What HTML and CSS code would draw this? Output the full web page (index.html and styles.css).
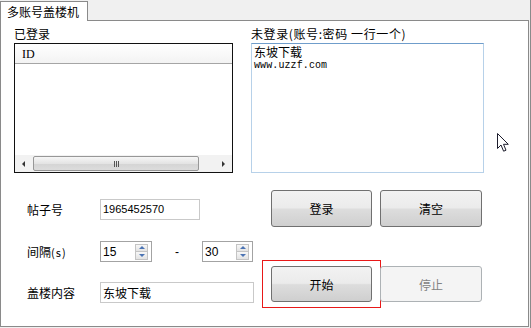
FILE: index.html
```html
<!DOCTYPE html>
<html lang="zh">
<head>
<meta charset="utf-8">
<title>多账号盖楼机</title>
<link rel="stylesheet" href="styles.css">
</head>
<body>
<div class="window">
  <div class="tabs"><div class="tab">多账号盖楼机</div></div>
  <div class="panel">
    <div class="top">
      <div class="col col-left">
        <div class="label">已登录</div>
        <div class="listbox">
          <div class="lv-header"><span class="lv-col">ID</span></div>
          <div class="lv-body"></div>
          <div class="hscroll">
            <div class="sb-btn"><span class="tri-left"></span></div>
            <div class="sb-track"><div class="sb-thumb"><span class="grip"></span><span class="grip"></span><span class="grip"></span></div></div>
            <div class="sb-btn"><span class="tri-right"></span></div>
          </div>
        </div>
      </div>
      <div class="col col-right">
        <div class="label label-wide">未登录(账号:密码 一行一个)</div>
        <div class="textarea">
          <div class="ta-line1">东坡下载</div>
          <div class="ta-line2">www.uzzf.com</div>
        </div>
      </div>
    </div>
    <div class="bottom">
      <div class="form">
        <div class="row row1">
          <div class="flabel">帖子号</div>
          <div class="input w-post">1965452570</div>
        </div>
        <div class="row row2">
          <div class="flabel">间隔<span class="paren">(s)</span></div>
          <div class="spin w-spin1"><span class="spin-val">15</span><span class="spin-btns"><span class="sbtn"><i class="up"></i></span><span class="sbtn"><i class="down"></i></span></span></div>
          <div class="dash">-</div>
          <div class="spin w-spin2"><span class="spin-val">30</span><span class="spin-btns"><span class="sbtn"><i class="up"></i></span><span class="sbtn"><i class="down"></i></span></span></div>
        </div>
        <div class="row row3">
          <div class="flabel">盖楼内容</div>
          <div class="input w-content cjk">东坡下载</div>
        </div>
      </div>
      <div class="buttons">
        <div class="btn">登录</div>
        <div class="btn btn-wide">清空</div>
        <div class="btn focused">开始</div>
        <div class="btn btn-wide disabled">停止</div>
      </div>
    </div>
    <svg class="cursor" width="13" height="20" viewBox="0 0 13 20"><path d="M0.5 0.5 L0.5 15.5 L4 12 L6.6 18.2 L9 17.2 L6.5 11.3 L11.3 11.3 Z" fill="#fff" stroke="#1c1c2c" stroke-width="1" stroke-linejoin="miter"/></svg>
  </div>
</div>
</body>
</html>
```

FILE: styles.css
```css
* { box-sizing: border-box; }
html, body { margin: 0; padding: 0; }
body {
  background: #f0f0f0;
  font-family: "Noto Sans CJK SC", "Liberation Sans", sans-serif;
  font-size: 12px;
  color: #000;
  width: 531px;
  height: 328px;
  overflow: hidden;
}
.window {
  width: 531px;
  height: 328px;
  border-right: 1px solid #8a8a8a;
  background: #f0f0f0;
}
.tabs {
  height: 20px;
  display: flex;
  align-items: flex-end;
}
.tab {
  position: relative;
  z-index: 1;
  width: 88px;
  height: 20px;
  margin-bottom: -1px;
  background: #fff;
  border: 1px solid #8a8a8a;
  border-bottom: none;
  padding-left: 6px;
  line-height: 19px;
  font-size: 12px;
}
.panel {
  position: relative;
  width: 529px;
  height: 307px;
  background: #fff;
  border: 1px solid #8a8a8a;
  padding: 5px 0 0 13px;
}
.top {
  display: flex;
  gap: 18px;
}
.col-left { width: 219px; }
.col-right { width: 233px; }
.label {
  height: 17px;
  line-height: 15px;
  font-size: 12px;
  white-space: nowrap;
}
.label-wide { letter-spacing: 0.6px; }
.listbox {
  height: 130px;
  border: 1px solid #111;
  display: flex;
  flex-direction: column;
  background: #fff;
}
.lv-header {
  height: 20px;
  border-bottom: 1px solid #a5a5a5;
  background: linear-gradient(#ffffff, #f3f3f3);
  padding-left: 7px;
  line-height: 18px;
}
.lv-col {
  font-family: "Liberation Serif", serif;
  font-size: 12px;
}
.lv-body { flex: 1; }
.hscroll {
  height: 17px;
  display: flex;
  background: #f2f2f2;
}
.sb-btn {
  width: 17px;
  display: flex;
  align-items: center;
  justify-content: center;
}
.tri-left {
  width: 0; height: 0;
  border-top: 3px solid transparent;
  border-bottom: 3px solid transparent;
  border-right: 3px solid #333;
}
.tri-right {
  width: 0; height: 0;
  border-top: 3px solid transparent;
  border-bottom: 3px solid transparent;
  border-left: 3px solid #333;
}
.sb-track {
  flex: 1;
  display: flex;
  align-items: center;
  padding-left: 1px;
}
.sb-thumb {
  width: 166px;
  height: 15px;
  border: 1px solid #979797;
  border-radius: 2px;
  background: linear-gradient(#f6f6f6, #e4e4e4 50%, #d4d4d4 51%, #dcdcdc);
  display: flex;
  align-items: center;
  justify-content: center;
  gap: 1px;
}
.grip {
  width: 1px;
  height: 6px;
  background: #555;
}
.textarea {
  height: 130px;
  border: 1px solid #b7d1e9;
  border-top-color: #6f9dcb;
  padding: 0 2px;
}
.ta-line1 {
  font-size: 12px;
  line-height: 16px;
  height: 17px;
}
.ta-line2 {
  font-family: "Liberation Mono", monospace;
  font-size: 10px;
  line-height: 10px;
  letter-spacing: 0.1px;
}
.bottom {
  display: flex;
}
.form {
  width: 240px;
  padding-left: 13px;
  padding-top: 26px;
  display: flex;
  flex-direction: column;
}
.row {
  display: flex;
  align-items: center;
  height: 21px;
}
.row2 { margin-top: 21px; }
.row3 { margin-top: 20px; }
.flabel {
  width: 73px;
  font-size: 12px;
  white-space: nowrap;
}
.paren { font-size: 11px; letter-spacing: 1px; }
.input {
  height: 21px;
  border: 1px solid #c9c9c9;
  padding-left: 2px;
  font-family: "Liberation Sans", sans-serif;
  font-size: 11px;
  line-height: 19px;
}
.input.cjk {
  font-family: "Noto Sans CJK SC", sans-serif;
  font-size: 12px;
}
.w-post { width: 100px; }
.w-content { width: 154px; }
.spin {
  height: 21px;
  border: 1px solid #a3a3a3;
  display: flex;
  align-items: center;
  justify-content: space-between;
  padding: 0 3px 0 2px;
  font-family: "Liberation Sans", sans-serif;
  font-size: 12px;
}
.w-spin1 { width: 52px; }
.w-spin2 { width: 51px; }
.dash {
  width: 50px;
  text-align: center;
  font-family: "Liberation Sans", sans-serif;
  font-size: 12px;
}
.spin-btns {
  display: flex;
  flex-direction: column;
  width: 13px;
}
.sbtn {
  height: 8px;
  border: 1px solid #c4c4c4;
  background: linear-gradient(#f7f7f7, #e3e3e3);
  display: flex;
  align-items: center;
  justify-content: center;
}
.sbtn + .sbtn { border-top: none; }
.up {
  width: 0; height: 0;
  border-left: 3px solid transparent;
  border-right: 3px solid transparent;
  border-bottom: 3px solid #4c74b4;
}
.down {
  width: 0; height: 0;
  border-left: 3px solid transparent;
  border-right: 3px solid transparent;
  border-top: 3px solid #4c74b4;
}
.buttons {
  margin-left: 17px;
  padding-top: 17px;
  display: grid;
  grid-template-columns: 101px 102px;
  grid-template-rows: 37px 36px;
  column-gap: 8px;
  row-gap: 39px;
}
.btn {
  border: 1px solid #707070;
  border-radius: 3px;
  background: linear-gradient(#f2f2f2, #ebebeb 48%, #dddddd 52%, #cfcfcf);
  display: flex;
  align-items: center;
  justify-content: center;
  font-size: 12px;
  position: relative;
}
.btn.disabled {
  border-color: #adb2b5;
  background: #f4f4f4;
  color: #838383;
}
.btn.focused::after {
  content: "";
  position: absolute;
  top: -7px; bottom: -7px;
  left: -10px; right: -10px;
  border: 1px solid #e81818;
}
.cursor {
  position: absolute;
  left: 496px;
  top: 112px;
}
```
